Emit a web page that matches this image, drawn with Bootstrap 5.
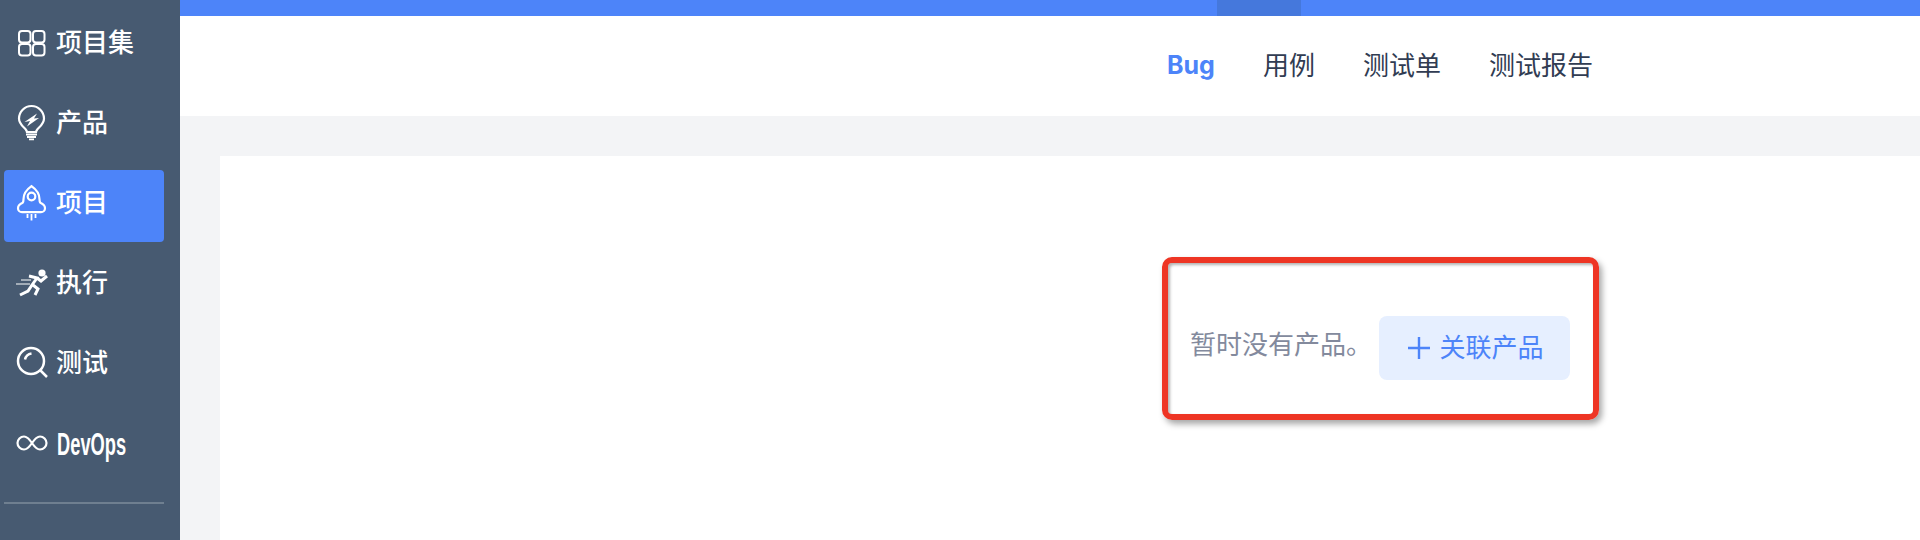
<!DOCTYPE html>
<html lang="zh"><head><meta charset="utf-8">
<link href="https://cdn.jsdelivr.net/npm/bootstrap@5.3.0/dist/css/bootstrap.min.css" rel="stylesheet">
<script src="https://cdn.jsdelivr.net/npm/bootstrap@5.3.0/dist/js/bootstrap.bundle.min.js"></script>
<style>
html,body{height:540px;overflow:hidden;background:#f3f4f6;font-family:"Liberation Sans","Noto Sans CJK SC",sans-serif}
.side{width:180px;height:540px;background:#475a71;flex:none;padding:10px 16px 0 4px}
.side-item{height:72px;margin-bottom:8px;padding:0 0 6px 12px;color:#fff;font-size:26px;font-weight:500;border-radius:4px;gap:8px}
.side-item.on{background:#4d84f9}
.side-item svg{flex:none;overflow:visible}
.devops{font-weight:700;font-size:31px;line-height:1;margin:3px 0 0 1px;transform:scaleX(.59);transform-origin:left center}
.rule{border-top:2px solid #6f7f90;margin-top:20px}
.topbar{height:16px;background:#4d84f9;padding-left:1037px}
.topbar-seg{width:84px;height:16px;background:#4578dc}
.subnav{height:100px;background:#fff;padding-left:987px;gap:48px;font-size:26px;color:#313c52}
.subnav .cur{color:#4d84f9;font-weight:700;font-family:Inter,sans-serif;font-size:25px}
.panel{margin:40px 0 0 40px;background:#fff;height:400px;padding:160px 0 0 970px}
.empty-text{color:#838a9d;font-size:26px;margin-right:7px;height:64px;padding-bottom:6px}
.addbtn{width:191px;height:64px;background:#e6efff;color:#4d84f9;border-radius:8px;font-size:26px;gap:10px;border:0;padding:0 0 0 2px}
.redbox{position:absolute;left:1162px;top:257px;width:437px;height:163px;border:6px solid #ee3524;border-radius:10px;box-shadow:3px 4px 6px rgba(0,0,0,.35),inset 2px 2px 3px rgba(0,0,0,.3);pointer-events:none}
</style></head><body>
<div class="d-flex">
<nav class="side">
<div class="side-item d-flex align-items-center"><svg width="32" height="26" viewBox="0 0 32 26" fill="none" stroke="#fff" stroke-width="2"><rect x="3" y="1" width="11.500" height="11.500" rx="3"/><rect x="17" y="1" width="11.500" height="11.500" rx="3"/><rect x="3" y="14" width="11.500" height="11.500" rx="3"/><rect x="17" y="14" width="11.500" height="11.500" rx="3"/></svg><span>项目集</span></div>
<div class="side-item d-flex align-items-center"><svg width="32" height="34" viewBox="0 0 32 34" fill="none" stroke="#fff" stroke-width="2.200"><path d="M11 26c0-4-8-6-8-13.500a12.500 12.500 0 0 1 25 0C28 20 20 22 20 26z"/><path d="M10 28.500h11M11 31h9M13 33.300h5" stroke-width="1.800"/><path d="M8.500 16L21 7.500l-3 5 5-.5-12 8.500 3-5.500z" fill="#fff" stroke="none"/></svg><span>产品</span></div>
<div class="side-item on d-flex align-items-center"><svg width="32" height="36" viewBox="0 0 32 36" fill="none" stroke="#fff" stroke-width="2.200"><path d="M15.500 1.200c5 3.500 8 8 8 13 0 1.500.2 2.500.8 3.500 2.500 1 4.700 3 4.700 5.500a4 4 0 0 1-4 4H6a4 4 0 0 1-4-4c0-2.500 2.200-4.500 4.700-5.500.6-1 .8-2 .8-3.500 0-5 3-9.500 8-13z"/><circle cx="15.500" cy="11.500" r="3.800"/><path d="M11.500 29v4M15.500 29v6.500M19.500 29v4" stroke-width="1.800"/></svg><span>项目</span></div>
<div class="side-item d-flex align-items-center"><svg width="32" height="30" viewBox="0 0 32 30" fill="none" stroke="#fff"><circle cx="26" cy="5" r="3.600" fill="#fff" stroke="none"/><path d="M0 16h14M5 12h10" stroke-width="1"/><path d="M4 27l8-4 4-6 5-7-8-2M21 10l4 3 6-5M17 17l5 4-3 6" stroke-width="3"/></svg><span>执行</span></div>
<div class="side-item d-flex align-items-center"><svg width="32" height="32" viewBox="0 0 32 32" fill="none" stroke="#fff" stroke-width="2.500"><circle cx="15" cy="14" r="13"/><path d="M9 12.500a8 8 0 0 1 6.500-6M24.500 23.500l6.500 6.500"/></svg><span>测试</span></div>
<div class="side-item d-flex align-items-center"><svg width="32" height="16" viewBox="0 0 32 16" fill="none" stroke="#fff" stroke-width="2.200"><path d="M16 8C13 3.500 10.500 1.500 8 1.500a6.500 6.500 0 0 0 0 13c2.500 0 5-2 8-6.500s5.500-6.500 8-6.500a6.500 6.500 0 0 1 0 13c-2.500 0-5-2-8-6.500z"/></svg><span class="devops">DevOps</span></div>
<div class="rule"></div>
</nav>
<main class="flex-grow-1">
<div class="topbar"><div class="topbar-seg"></div></div>
<div class="subnav d-flex align-items-center"><span class="cur">Bug</span><span>用例</span><span>测试单</span><span>测试报告</span></div>
<div class="panel d-flex align-items-start"><span class="empty-text d-flex align-items-center">暂时没有产品。</span><button class="addbtn d-flex align-items-center justify-content-center"><svg width="22" height="22" viewBox="0 0 22 22" stroke="#4d84f9" stroke-width="2.400"><path d="M11 0v22M0 11h22"/></svg>关联产品</button></div>
</main>
</div>
<div class="redbox"></div>
</body></html>
